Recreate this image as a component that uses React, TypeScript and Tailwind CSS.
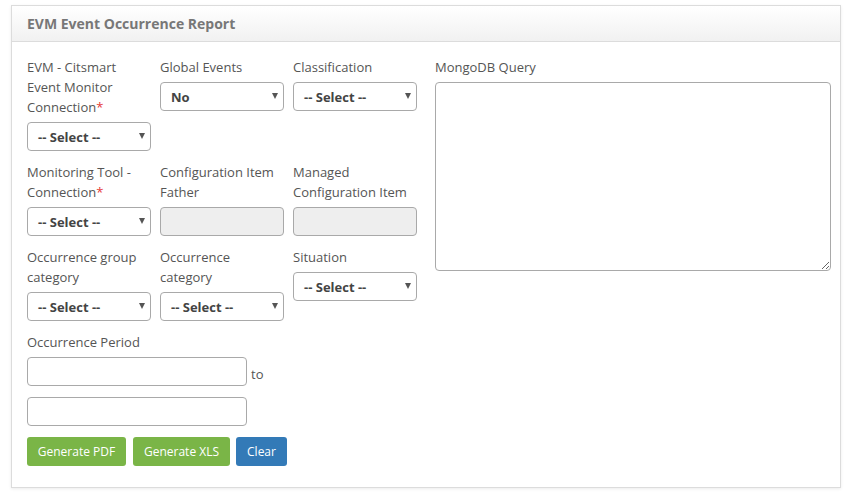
import type { ReactNode } from 'react'

function Label({ children, required }: { children: ReactNode; required?: boolean }) {
  return (
    <label className="block text-[13px] leading-5 text-[#555]">
      {children}
      {required && <span className="text-[#e53935]">*</span>}
    </label>
  )
}

function Select({ value = '-- Select --' }: { value?: string }) {
  return (
    <div className="relative mt-[5px] flex h-[29px] w-[124px] items-center rounded-[4px] border border-[#a9a9a9] bg-white pl-[10px] pt-[2px]">
      <span className="text-[13px] font-bold text-[#444]">{value}</span>
      <span className="absolute right-[5px] top-[10px] h-0 w-0 border-x-[3px] border-t-[6px] border-x-transparent border-t-[#555]" />
    </div>
  )
}

function Disabled() {
  return <div className="mt-[5px] h-[29px] w-[124px] rounded-[4px] border border-[#a9a9a9] bg-[#eeeeee]" />
}

function Field({ label, required, children }: { label: ReactNode; required?: boolean; children: ReactNode }) {
  return (
    <div className="w-[124px]">
      <Label required={required}>{label}</Label>
      {children}
    </div>
  )
}

export default function App() {
  return (
    <div className="min-h-screen bg-white pl-[11px] pt-[5px] font-['Open_Sans',sans-serif]">
      <div className="w-[830px] h-[483px] border border-[#dcdcdc] bg-white shadow-[0_1px_3px_rgba(0,0,0,0.08)]">
        <div className="flex h-[36px] items-center border-b border-[#dcdcdc] bg-gradient-to-b from-white to-[#f1f1f1] pl-[15px]">
          <h1 className="text-[14px] font-bold text-[#777]">EVM Event Occurrence Report</h1>
        </div>
        <div className="flex pl-[15px] pt-[15px]">
          <div className="flex w-[390px] flex-col gap-[11px]">
            <div className="grid grid-cols-[124px_124px_124px] items-start gap-x-[9px] gap-y-[11px]">
              <Field label={<>EVM - Citsmart<br />Event Monitor<br />Connection</>} required>
                <Select />
              </Field>
              <Field label="Global Events">
                <Select value="No" />
              </Field>
              <Field label="Classification">
                <Select />
              </Field>

              <Field label={<>Monitoring Tool -<br />Connection</>} required>
                <Select />
              </Field>
              <Field label={<>Configuration Item<br />Father</>}>
                <Disabled />
              </Field>
              <Field label={<>Managed<br />Configuration Item</>}>
                <Disabled />
              </Field>

              <Field label={<>Occurrence group<br />category</>}>
                <Select />
              </Field>
              <Field label={<>Occurrence<br />category</>}>
                <Select />
              </Field>
              <Field label="Situation">
                <Select />
              </Field>
            </div>

            <div>
              <Label>Occurrence Period</Label>
              <div className="mt-[5px] flex items-center">
                <input className="h-[29px] w-[220px] rounded-[4px] border border-[#a9a9a9] bg-white" />
                <span className="ml-[4px] mt-[7px] text-[13px] text-[#555]">to</span>
              </div>
              <input className="mt-[11px] block h-[29px] w-[220px] rounded-[4px] border border-[#a9a9a9] bg-white" />
            </div>

            <div className="flex gap-[7px]">
              <button className="h-[29px] w-[99px] rounded-[3px] bg-[#7ab547] text-[12px] text-white">Generate PDF</button>
              <button className="h-[29px] w-[97px] rounded-[3px] bg-[#7ab547] text-[12px] text-white">Generate XLS</button>
              <button className="-ml-[1px] h-[29px] w-[51px] rounded-[3px] bg-[#337ab7] text-[12px] text-white">Clear</button>
            </div>
          </div>

          <div className="ml-[18px] w-[396px]">
            <Label>MongoDB Query</Label>
            <textarea className="mt-[5px] block h-[189px] w-[396px] rounded-[4px] border border-[#a9a9a9] bg-white" />
          </div>
        </div>
      </div>
    </div>
  )
}
